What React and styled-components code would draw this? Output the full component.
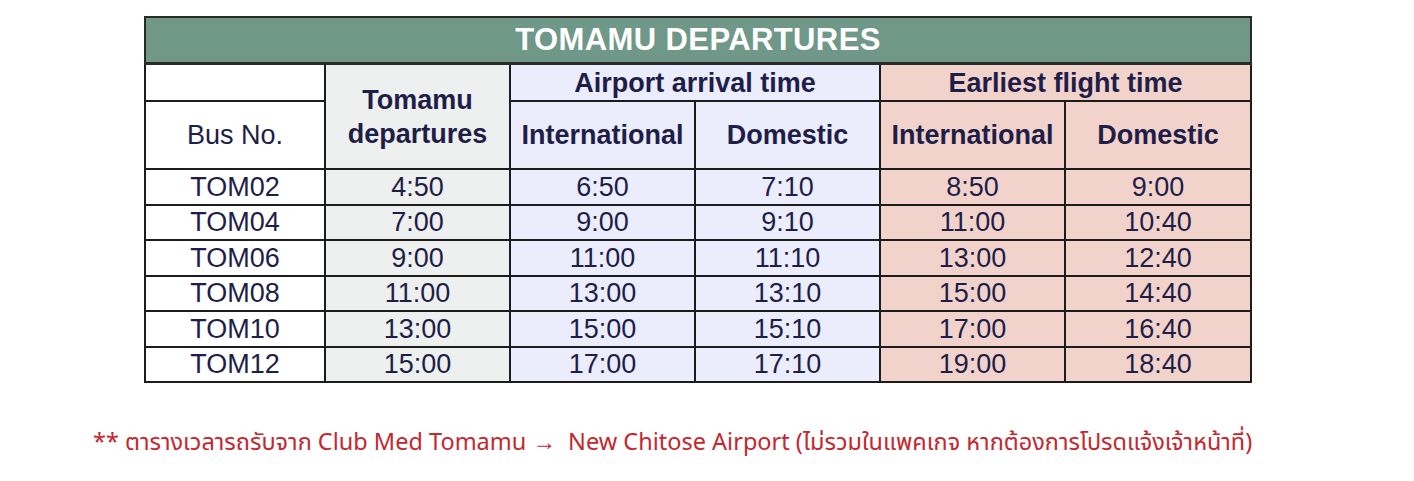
import React from "react";
import styled, { createGlobalStyle } from "styled-components";

const Global = createGlobalStyle`
  html, body { margin: 0; padding: 0; background: #ffffff; }
  body { font-family: "Liberation Sans", Arial, sans-serif; }
`;

const Page = styled.div`
  width: 1414px;
  height: 481px;
  box-sizing: border-box;
  padding: 16px 0 0 0;
  display: flex;
  flex-direction: column;
`;

const TableWrap = styled.div`
  padding-left: 144px;
`;

const Table = styled.table`
  border-collapse: collapse;
  width: 1106px;
  table-layout: fixed;
  color: #1e1e48;
  font-family: "Liberation Sans", Arial, sans-serif;
`;

const TitleCell = styled.th`
  background: #6f9889;
  color: #ffffff;
  font-size: 31px;
  font-weight: 700;
  height: 44px;
  padding: 0;
  border: 2px solid #2a2a2a;
  border-bottom-width: 3px;
  text-align: center;
  letter-spacing: 0.4px;
`;

const tones = {
  white: "#ffffff",
  gray: "#edf0ee",
  blue: "#ebedfc",
  pink: "#f2d3cc",
};

const Head = styled.th`
  background: ${(p) => tones[p.$tone]};
  font-size: 27px;
  font-weight: ${(p) => (p.$light ? 400 : 700)};
  line-height: 34px;
  padding: 0;
  border: 2px solid #1c1c1c;
  text-align: center;
  vertical-align: middle;
  height: ${(p) => p.$h}px;
  white-space: nowrap;
`;

const Cell = styled.td`
  background: ${(p) => tones[p.$tone]};
  font-size: 27px;
  font-weight: 400;
  padding: 0;
  height: 33.5px;
  line-height: 30px;
  border: 2px solid #1c1c1c;
  text-align: center;
  vertical-align: middle;
`;

const Note = styled.p`
  margin: 43px 0 0 93px;
  color: #c4272d;
  font-family: "Noto Sans", "Noto Sans Thai", "Noto Sans Thai UI", sans-serif;
  font-size: 23.5px;
  line-height: 30px;
  white-space: nowrap;
`;

const rows = [
  ["TOM02", "4:50", "6:50", "7:10", "8:50", "9:00"],
  ["TOM04", "7:00", "9:00", "9:10", "11:00", "10:40"],
  ["TOM06", "9:00", "11:00", "11:10", "13:00", "12:40"],
  ["TOM08", "11:00", "13:00", "13:10", "15:00", "14:40"],
  ["TOM10", "13:00", "15:00", "15:10", "17:00", "16:40"],
  ["TOM12", "15:00", "17:00", "17:10", "19:00", "18:40"],
];
const colTones = ["white", "gray", "blue", "blue", "pink", "pink"];

export default function App() {
  return (
    <>
      <Global />
      <Page>
        <TableWrap>
          <Table>
            <colgroup>
              <col style={{ width: 180 }} />
              <col style={{ width: 185 }} />
              <col style={{ width: 185 }} />
              <col style={{ width: 185 }} />
              <col style={{ width: 185 }} />
              <col style={{ width: 186 }} />
            </colgroup>
            <thead>
              <tr>
                <TitleCell colSpan={6}>TOMAMU DEPARTURES</TitleCell>
              </tr>
              <tr>
                <Head $tone="white" $h={35}></Head>
                <Head $tone="gray" rowSpan={2}>
                  Tomamu
                  <br />
                  departures
                </Head>
                <Head $tone="blue" colSpan={2} $h={35}>
                  Airport arrival time
                </Head>
                <Head $tone="pink" colSpan={2} $h={35}>
                  Earliest flight time
                </Head>
              </tr>
              <tr>
                <Head $tone="white" $light $h={66}>
                  Bus No.
                </Head>
                <Head $tone="blue" $h={66}>International</Head>
                <Head $tone="blue" $h={66}>Domestic</Head>
                <Head $tone="pink" $h={66}>International</Head>
                <Head $tone="pink" $h={66}>Domestic</Head>
              </tr>
            </thead>
            <tbody>
              {rows.map((r) => (
                <tr key={r[0]}>
                  {r.map((v, i) => (
                    <Cell key={i} $tone={colTones[i]}>
                      {v}
                    </Cell>
                  ))}
                </tr>
              ))}
            </tbody>
          </Table>
        </TableWrap>
        <Note>
          ** ตารางเวลารถรับจาก Club Med Tomamu →&nbsp; New Chitose Airport (ไม่รวมในแพคเกจ หากต้องการโปรดแจ้งเจ้าหน้าที่)
        </Note>
      </Page>
    </>
  );
}
